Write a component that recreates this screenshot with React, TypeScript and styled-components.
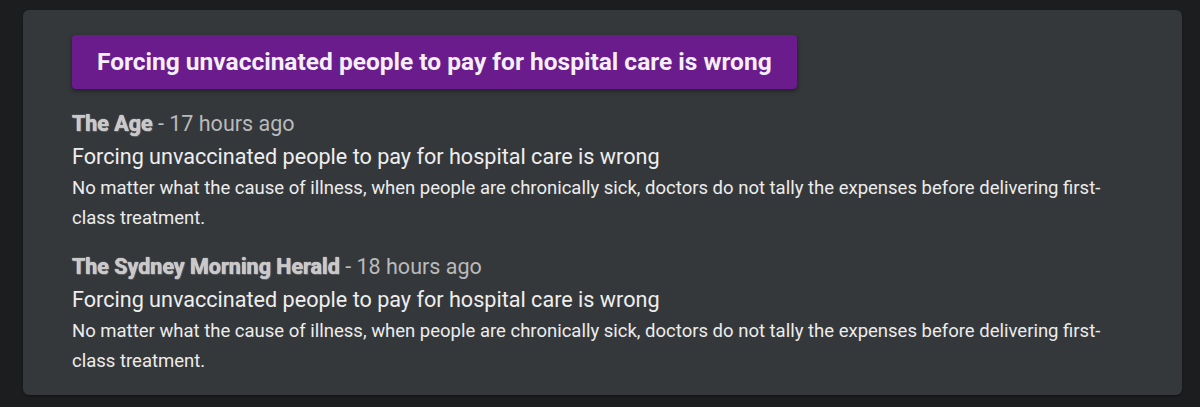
import React from 'react';
import styled, { createGlobalStyle } from 'styled-components';

const GlobalStyle = createGlobalStyle`
  html, body {
    margin: 0;
    padding: 0;
    background: #1c1d1f;
  }
  body {
    font-family: Roboto, "Liberation Sans", sans-serif;
  }
`

const Page = styled.div`
  padding: 10px 18px 12px 23px;
`

const Card = styled.div`
  background-color: #35383b;
  border-radius: 6px;
  padding: 25px 60px 19px 49px;
  box-shadow: 0 1px 2px rgba(0, 0, 0, 0.4);
`

const HeadButton = styled.div`
  display: inline-block;
  background-color: #6a1b8c;
  color: #f4eef6;
  font-size: 24.5px;
  font-weight: 700;
  padding: 0 25px;
  height: 54px;
  line-height: 54px;
  border-radius: 4px;
  box-shadow: 0 2px 4px rgba(0, 0, 0, 0.45);
  margin-bottom: 19px;
`

const List = styled.ul`
  margin: 0;
  padding: 0;
`

const Item = styled.li`
  list-style: none;
  margin-bottom: 18px;

  &:last-child {
    margin-bottom: 0;
  }
`

const Source = styled.div`
  font-size: 21.5px;
  line-height: 32px;
  color: #b9babb;
`

const SourceName = styled.span`
  font-weight: 700;
  color: #c9c9c9;
  text-shadow: 0 0 1px #fff, 1px 1px 1px #555;
`

const Title = styled.div`
  font-size: 21.6px;
  line-height: 33px;
  color: #eeeeee;
`

const Desc = styled.div`
  font-size: 18.5px;
  line-height: 30px;
  color: #ececec;
`

interface INews {
  source: string;
  time: string;
  title: string;
  desc: string;
}

const news: INews[] = [
  {
    source: 'The Age',
    time: '17 hours ago',
    title: 'Forcing unvaccinated people to pay for hospital care is wrong',
    desc: 'No matter what the cause of illness, when people are chronically sick, doctors do not tally the expenses before delivering first-class treatment.',
  },
  {
    source: 'The Sydney Morning Herald',
    time: '18 hours ago',
    title: 'Forcing unvaccinated people to pay for hospital care is wrong',
    desc: 'No matter what the cause of illness, when people are chronically sick, doctors do not tally the expenses before delivering first-class treatment.',
  },
]

const App = () => {
  return (
    <>
      <GlobalStyle />
      <Page>
        <Card>
          <HeadButton>Forcing unvaccinated people to pay for hospital care is wrong</HeadButton>
          <List>
            {news.map(item => (
              <Item key={item.source}>
                <Source>
                  <SourceName>{item.source}</SourceName> - {item.time}
                </Source>
                <Title>{item.title}</Title>
                <Desc>{item.desc}</Desc>
              </Item>
            ))}
          </List>
        </Card>
      </Page>
    </>
  );
};

export default App;
